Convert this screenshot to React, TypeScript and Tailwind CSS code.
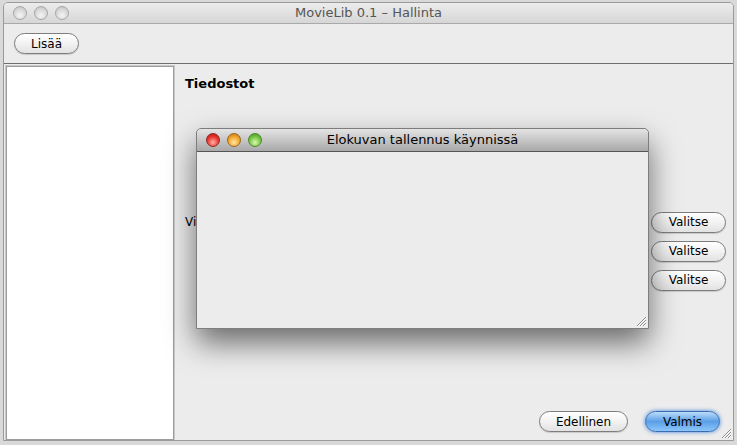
import React from "react"

const font = { fontFamily: '"DejaVu Sans", "Liberation Sans", sans-serif' }

function Light({ color }: { color: "gray" | "red" | "orange" | "green" }) {
  const cls =
    color === "red"
      ? "bg-[radial-gradient(circle_at_50%_70%,#ffb0a8_0%,#e8352c_55%,#a8140e_100%)] border-[#8e2a24]"
      : color === "orange"
      ? "bg-[radial-gradient(circle_at_50%_70%,#ffe6a0_0%,#f2a530_55%,#b8700c_100%)] border-[#99661c]"
      : color === "green"
      ? "bg-[radial-gradient(circle_at_50%_70%,#d8f8b0_0%,#76c444_55%,#3e8a1c_100%)] border-[#4e8a2c]"
      : "bg-[radial-gradient(circle_at_50%_70%,#f4f4f4_0%,#d6d6d6_60%,#bdbdbd_100%)] border-[#a6a6a6]"
  return <div className={`w-[14px] h-[14px] rounded-full border ${cls}`} />
}

function Btn({ label, w, blue }: { label: string; w: string; blue?: boolean }) {
  return (
    <button
      className={
        blue
          ? `${w} h-[21px] rounded-full border border-[#3a6cae] bg-gradient-to-b from-[#bcdcfa] via-[#5a9fe6] to-[#8cc6fa] text-[12px] text-black shadow-[0_0_4px_rgba(50,120,220,0.9)]`
          : `${w} h-[21px] rounded-full border border-[#7d7d7d] bg-gradient-to-b from-[#ffffff] via-[#f2f2f2] to-[#e2e2e2] text-[12px] text-black shadow-[0_1px_1px_rgba(0,0,0,0.15)]`
      }
      style={font}
    >
      {label}
    </button>
  )
}

function Grip() {
  return (
    <svg width="11" height="11" viewBox="0 0 11 11">
      <path d="M10 1 L1 10 M10 4 L4 10 M10 7 L7 10" stroke="#8a8a8a" strokeWidth="1" />
      <path d="M10 2 L2 10 M10 5 L5 10 M10 8 L8 10" stroke="#ffffff" strokeWidth="1" />
    </svg>
  )
}

export default function App() {
  return (
    <div className="relative w-[737px] h-[445px] overflow-hidden bg-[#d9d9d9]" style={font}>
      {/* main window */}
      <div className="absolute left-[3px] top-[2px] w-[731px] h-[439px] flex flex-col bg-[#ececec] border border-[#9a9a9a] rounded-t-[5px] overflow-hidden">
        <div className="relative h-[21px] flex items-center bg-gradient-to-b from-[#ececec] to-[#d6d6d6] border-b border-[#a9a9a9]">
          <div className="flex gap-[7px] ml-[9px]">
            <Light color="gray" />
            <Light color="gray" />
            <Light color="gray" />
          </div>
          <p className="absolute inset-0 text-center leading-[20px] text-[13px] text-[#555]">MovieLib 0.1 – Hallinta</p>
        </div>
        <div className="h-[40px] flex items-center px-[10px] border-b border-[#6f6f6f]">
          <Btn label="Lisää" w="w-[65px]" />
        </div>
        <div className="flex-1 flex">
          <div className="w-[172px] p-[2px] pb-0">
            <div className="h-full bg-white border border-[#9c9c9c] outline outline-1 outline-[#c8c8c8]" />
          </div>
          <div className="flex-1 flex flex-col pl-[9px] pr-[7px] pb-[8px]">
            <p className="mt-[10px] text-[13px] font-bold text-black">Tiedostot</p>
            <div className="mt-[118px] flex flex-col gap-[8px]">
              <div className="h-[21px] flex items-center justify-between">
                <span className="text-[12px]">Videotiedosto:</span>
                <Btn label="Valitse" w="w-[75px]" />
              </div>
              <div className="h-[21px] flex items-center justify-end">
                <Btn label="Valitse" w="w-[75px]" />
              </div>
              <div className="h-[21px] flex items-center justify-end">
                <Btn label="Valitse" w="w-[75px]" />
              </div>
            </div>
            <div className="flex-1" />
            <div className="flex justify-end gap-[17px] pr-[6px]">
              <Btn label="Edellinen" w="w-[89px]" />
              <Btn label="Valmis" w="w-[75px]" blue />
            </div>
          </div>
        </div>
        <div className="absolute right-[1px] bottom-[1px]">
          <Grip />
        </div>
      </div>

      {/* dialog */}
      <div className="absolute left-[196px] top-[128px] w-[453px] h-[201px] flex flex-col bg-[#ececec] border border-[#7d7d7d] rounded-t-[5px] shadow-[0_14px_30px_rgba(0,0,0,0.55)]">
        <div className="relative h-[23px] flex items-center bg-gradient-to-b from-[#e4e4e4] to-[#a9a9a9] border-b border-[#555] rounded-t-[5px]">
          <div className="flex gap-[7px] ml-[9px]">
            <Light color="red" />
            <Light color="orange" />
            <Light color="green" />
          </div>
          <p className="absolute inset-0 text-center leading-[22px] text-[13px] text-black">Elokuvan tallennus käynnissä</p>
        </div>
        <div className="flex-1 relative">
          <div className="absolute right-[1px] bottom-[1px]">
            <Grip />
          </div>
        </div>
      </div>
    </div>
  )
}
